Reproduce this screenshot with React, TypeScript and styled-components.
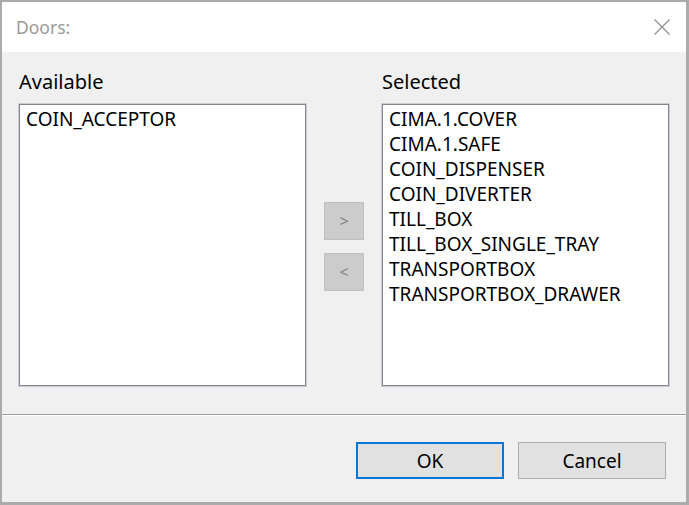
import React from "react";
import styled, { createGlobalStyle } from "styled-components";

const Global = createGlobalStyle`
  html, body { margin: 0; padding: 0; background: #ffffff; }
  * { box-sizing: border-box; }
`;

const Window = styled.div`
  width: 689px;
  height: 505px;
  display: flex;
  flex-direction: column;
  border-style: solid;
  border-color: #ababab;
  border-width: 2px 3px 3px 2px;
  background: #f0f0f0;
  font-family: "Segoe UI", "Noto Sans", sans-serif;
  color: #000;
`;

const TitleBar = styled.div`
  height: 50px;
  flex: none;
  background: #ffffff;
  display: flex;
  align-items: center;
  justify-content: space-between;
  padding: 0 16px 0 14px;
`;

const Title = styled.span`
  font-size: 17.5px;
  color: #9a9a9a;
`;

const CloseIcon = styled.svg`
  width: 16px;
  height: 16px;
`;

const Content = styled.div`
  flex: 1;
  display: grid;
  grid-template-columns: 287px 76px 287px;
  grid-template-rows: 24px 282px;
  align-content: start;
  padding: 18px 17px 0 17px;
  row-gap: 10px;
`;

const Label = styled.div`
  font-size: 20px;
  line-height: 24px;
  white-space: nowrap;
`;

const ListBox = styled.div`
  background: #ffffff;
  border: 1px solid #828790;
  box-shadow: 0 0 0 1px #c9cdd3;
  padding: 2px 6px;
  display: flex;
  flex-direction: column;
`;

const Item = styled.div`
  font-size: 19px;
  line-height: 25px;
  white-space: nowrap;
`;

const Mover = styled.div`
  display: flex;
  flex-direction: column;
  align-items: center;
  justify-content: center;
  gap: 13px;
  padding-top: 3px;
`;

const MoveButton = styled.div`
  width: 40px;
  height: 38px;
  background: #cccccc;
  border: 1px solid #bfbfbf;
  color: #838383;
  font-size: 16px;
  display: flex;
  align-items: center;
  justify-content: center;
`;

const Separator = styled.div`
  height: 2px;
  flex: none;
  border-top: 1px solid #a0a0a0;
  border-bottom: 1px solid #ffffff;
`;

const Footer = styled.div`
  height: 86px;
  flex: none;
  display: flex;
  justify-content: flex-end;
  align-items: flex-start;
  gap: 14px;
  padding: 26px 20px 0 0;
`;

const DialogButton = styled.div<{ $primary?: boolean }>`
  width: 148px;
  height: 37px;
  background: #e1e1e1;
  border: ${(p) => (p.$primary ? "2px solid #0078d7" : "1px solid #adadad")};
  font-size: 19px;
  display: flex;
  align-items: center;
  justify-content: center;
`;

const available = ["COIN_ACCEPTOR"];
const selected = [
  "CIMA.1.COVER",
  "CIMA.1.SAFE",
  "COIN_DISPENSER",
  "COIN_DIVERTER",
  "TILL_BOX",
  "TILL_BOX_SINGLE_TRAY",
  "TRANSPORTBOX",
  "TRANSPORTBOX_DRAWER",
];

export default function App() {
  return (
    <>
      <Global />
      <Window>
        <TitleBar>
          <Title>Doors:</Title>
          <CloseIcon viewBox="0 0 16 16">
            <path d="M0.5 0.5 L15.5 15.5 M15.5 0.5 L0.5 15.5" stroke="#8a8a8a" strokeWidth="1.1" fill="none" />
          </CloseIcon>
        </TitleBar>
        <Content>
          <Label>Available</Label>
          <div />
          <Label>Selected</Label>
          <ListBox>
            {available.map((a) => (
              <Item key={a}>{a}</Item>
            ))}
          </ListBox>
          <Mover>
            <MoveButton>&gt;</MoveButton>
            <MoveButton>&lt;</MoveButton>
          </Mover>
          <ListBox>
            {selected.map((a) => (
              <Item key={a}>{a}</Item>
            ))}
          </ListBox>
        </Content>
        <Separator />
        <Footer>
          <DialogButton $primary>OK</DialogButton>
          <DialogButton>Cancel</DialogButton>
        </Footer>
      </Window>
    </>
  );
}
